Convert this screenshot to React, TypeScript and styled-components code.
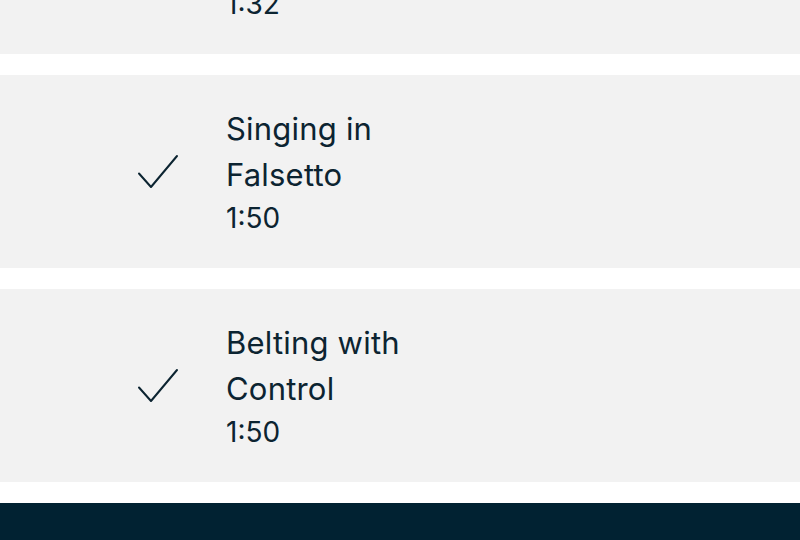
import React from "react";
import styled, { createGlobalStyle } from "styled-components";

const Global = createGlobalStyle`
  html, body { margin: 0; padding: 0; background: #ffffff; }
  body { font-family: Inter, "Noto Sans", sans-serif; color: #0c2431; overflow: hidden; }
`;

const Page = styled.div`
  width: 800px;
  height: 540px;
  overflow: hidden;
  display: flex;
  flex-direction: column;
`;

const List = styled.div`
  display: flex;
  flex-direction: column;
  gap: 21px;
  margin-top: -139px;
`;

const Card = styled.div`
  height: 193px;
  background: #f2f2f2;
  display: flex;
  align-items: center;
  padding-left: 137px;
  box-sizing: border-box;
`;

const CheckBox = styled.div`
  width: 42px;
  height: 36px;
  flex: none;
  margin-right: 47px;
  display: flex;
  align-items: center;
  justify-content: center;
`;

const Info = styled.div`
  display: flex;
  flex-direction: column;
`;

const Title = styled.div`
  font-size: 31px;
  line-height: 46px;
  font-weight: 400;
  letter-spacing: 0.2px;
  color: #0c2431;
`;

const Duration = styled.div`
  font-size: 28px;
  line-height: 40px;
  font-weight: 400;
  color: #0c2431;
`;

const BottomBar = styled.div`
  margin-top: 21px;
  height: 60px;
  background: #012232;
  flex: none;
`;

const Check = () => (
  <svg width="42" height="36" viewBox="0 0 42 36" fill="none">
    <path d="M2 19.5 L14 33 L40 2" stroke="#0c2431" strokeWidth="2" strokeLinecap="round" strokeLinejoin="round" />
  </svg>
);

const lessons = [
  { title: ["Breath", "Support"], time: "1:32", done: true },
  { title: ["Singing in", "Falsetto"], time: "1:50", done: true },
  { title: ["Belting with", "Control"], time: "1:50", done: true },
];

export default function App() {
  return (
    <Page>
      <Global />
      <List>
        {lessons.map((l, i) => (
          <Card key={i}>
            <CheckBox>{l.done && <Check />}</CheckBox>
            <Info>
              {l.title.map((t, j) => (
                <Title key={j}>{t}</Title>
              ))}
              <Duration>{l.time}</Duration>
            </Info>
          </Card>
        ))}
      </List>
      <BottomBar />
    </Page>
  );
}
